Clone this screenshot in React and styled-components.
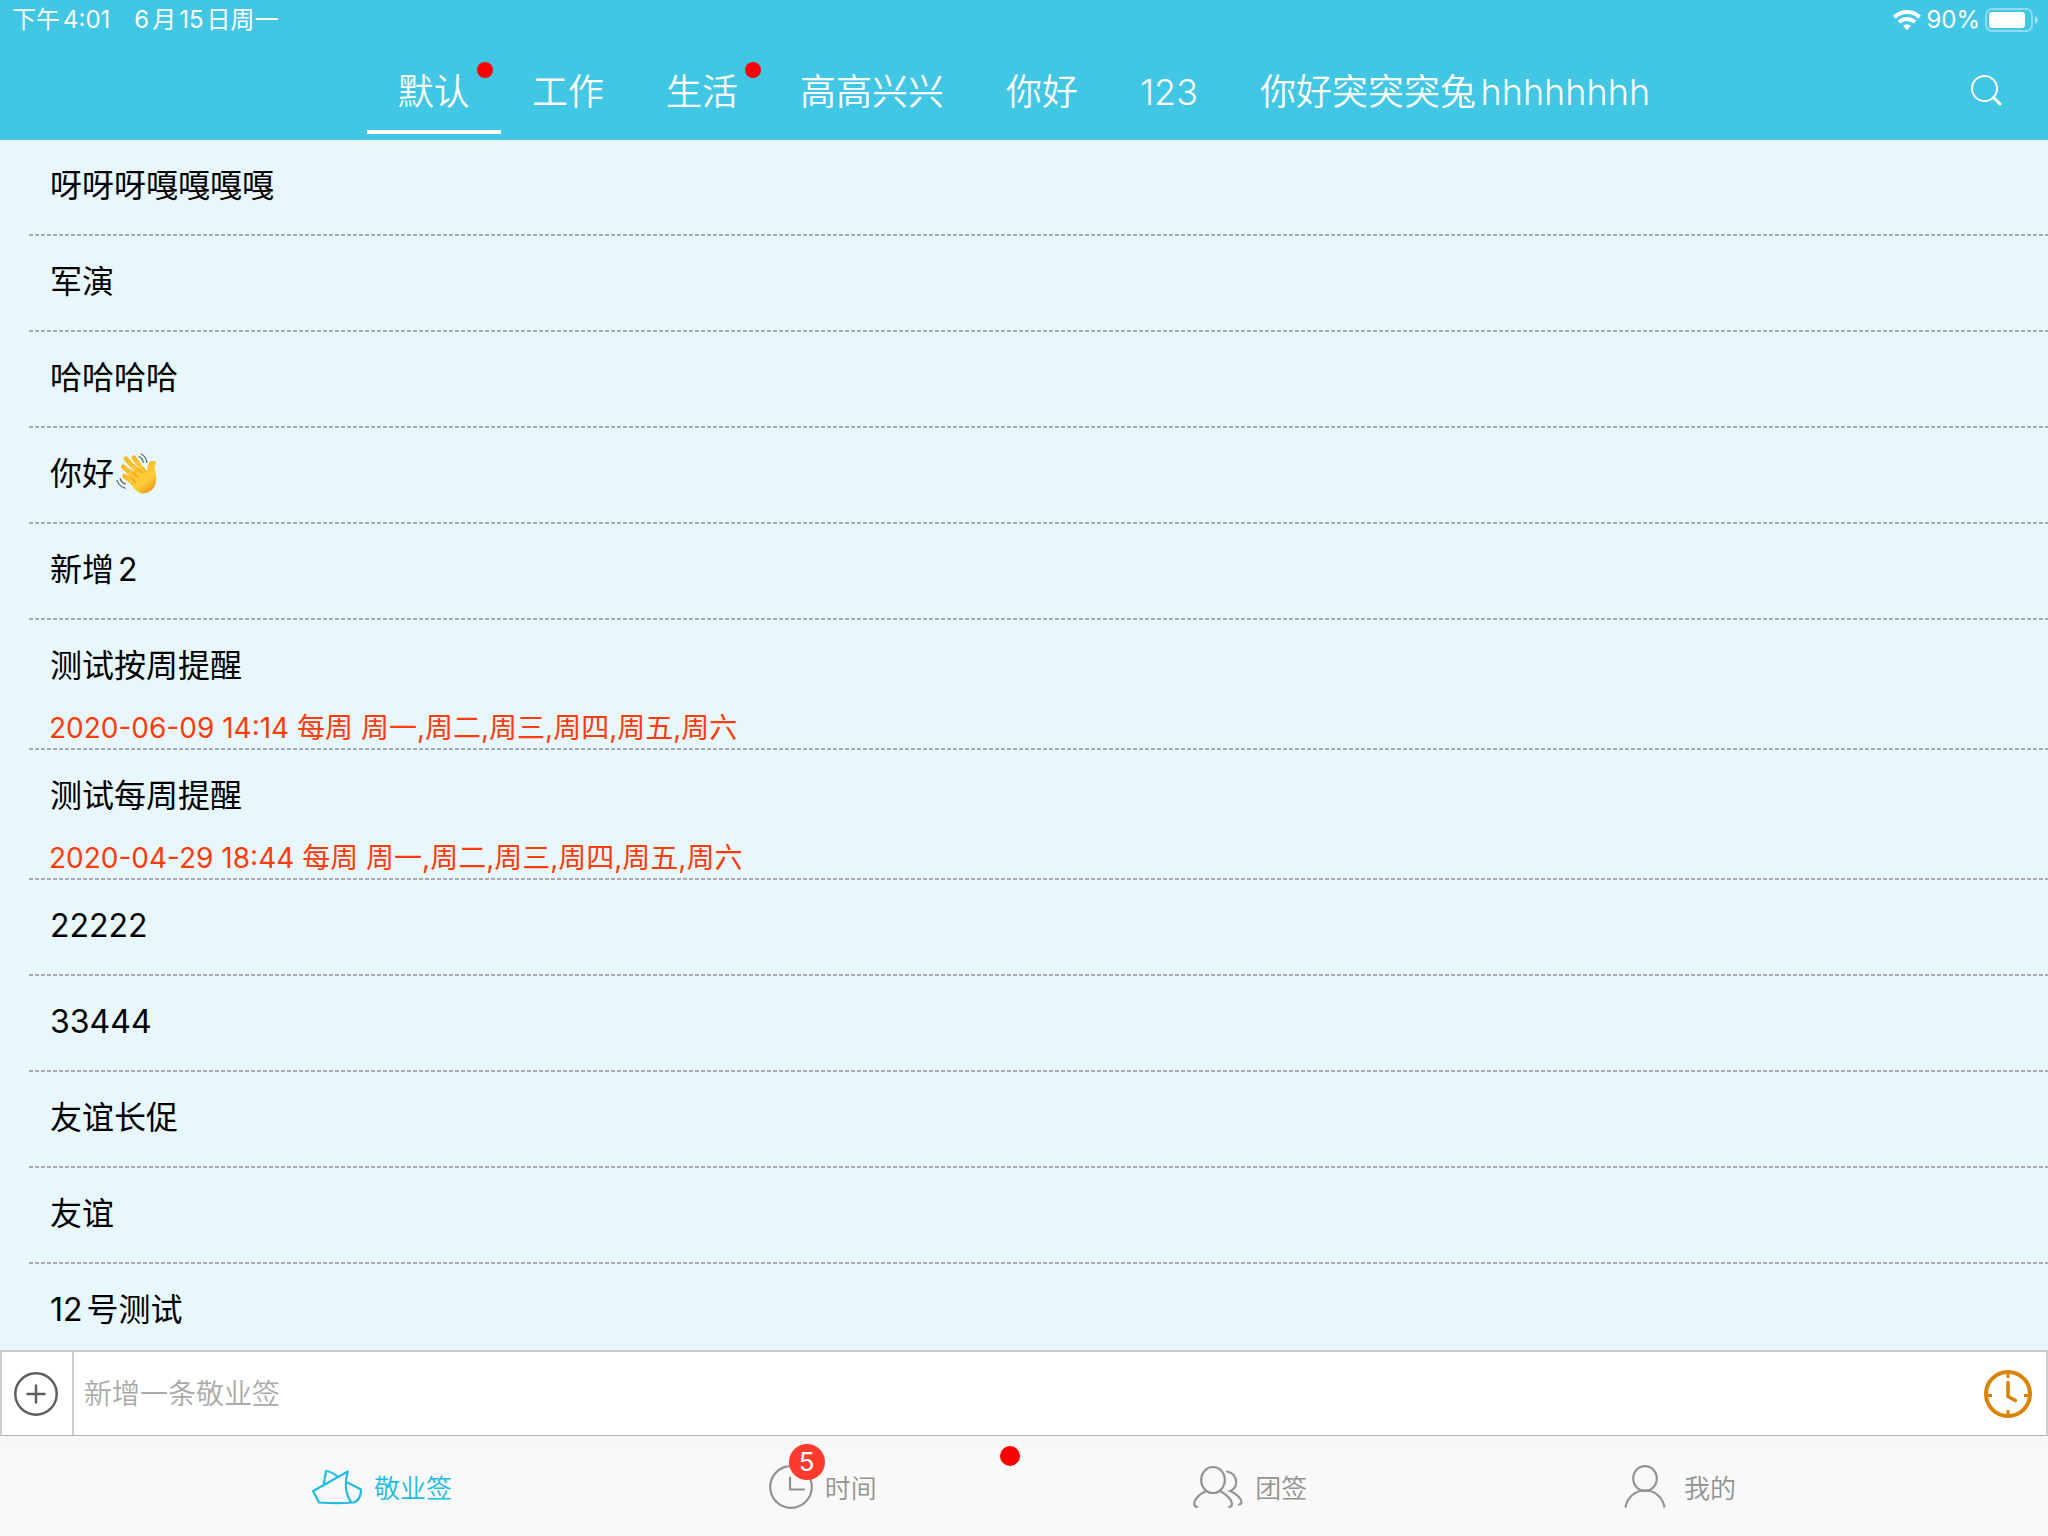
import React, { useState } from "react";
import styled, { createGlobalStyle } from "styled-components";

const color = {
  brand: "#41c6e4",
  accent: "#20bce2",
  list: "#e8f7fc",
  dash: "#a9a9a9",
  remind: "#ff3b0a",
  muted: "#929292",
  red: "#ff0000",
};

const GlobalStyle = createGlobalStyle`
  * { box-sizing: border-box; }
  body {
    margin: 0;
    font-family: Inter, "Noto Sans CJK SC", sans-serif;
    text-autospace: normal;
  }
  button, input { font-family: inherit; }
  button {
    border: 0;
    padding: 0;
    background: none;
    color: inherit;
    cursor: pointer;
    text-autospace: inherit;
  }
`;

const Page = styled.div`
  display: flex;
  flex-direction: column;
  height: 100vh;
  background: ${color.list};
`;

const Header = styled.header`
  flex: none;
  background: ${color.brand};
  color: #fff;
`;

const StatusBar = styled.div`
  display: flex;
  align-items: center;
  height: 40px;
  padding: 0 10px 0 12px;
  font-size: 24px;
  line-height: 40px;
`;

const StatusDate = styled.span`
  margin-left: 24px;
`;

const StatusRight = styled.div`
  display: flex;
  align-items: center;
  gap: 5px;
  margin-left: auto;
`;

const NavBar = styled.div`
  display: grid;
  grid-template-columns: 100px 1fr 100px;
  padding: 10px 0 6px;
`;

const Categories = styled.nav`
  grid-column: 2;
  display: flex;
  justify-content: center;
`;

const Category = styled.button`
  position: relative;
  height: 84px;
  padding: 4px 31px 0;
  border-bottom: 4px solid ${(p) => (p.$active ? "#fff" : "transparent")};
  font-size: 36px;
  font-weight: 350;
  line-height: 76px;
  white-space: nowrap;
`;

const CategoryDot = styled.span`
  position: absolute;
  top: 12px;
  right: 8px;
  width: 16px;
  height: 16px;
  border-radius: 50%;
  background: ${color.red};
`;

const SearchButton = styled.button`
  display: flex;
  align-items: center;
  justify-content: center;
  width: 76px;
  padding-bottom: 4px;
`;

const NoteList = styled.ul`
  flex: 1;
  min-height: 0;
  margin: 0;
  padding: 0 0 0 29px;
  overflow: hidden;
  list-style: none;
`;

const Note = styled.li`
  padding: 24px 20px ${(p) => (p.$reminder ? 2 : 28)}px;
  background: repeating-linear-gradient(90deg, ${color.dash} 0 4px, transparent 4px 6px)
    left bottom / 100% 2px no-repeat;
`;

const NoteTitle = styled.div`
  display: flex;
  align-items: center;
  gap: 2px;
  height: 44px;
  padding-left: 1px;
  font-size: 32px;
  line-height: 44px;
  color: #000;
`;

const NoteReminder = styled.div`
  margin-top: 20px;
  font-size: 28px;
  line-height: 40px;
  color: ${color.remind};
`;

const Composer = styled.form`
  flex: none;
  display: flex;
  height: 86px;
  border: 2px solid #ccc;
  border-bottom: 1px solid #b0b0b0;
  background: #fff;
`;

const AddButton = styled.button`
  display: flex;
  align-items: center;
  justify-content: center;
  width: 72px;
  padding-right: 2px;
  border-right: 2px solid #ccc;
`;

const NoteInput = styled.input`
  flex: 1;
  min-width: 0;
  padding: 0 10px;
  border: 0;
  outline: 0;
  background: none;
  font-size: 28px;
  font-weight: 350;
  &::placeholder {
    color: #aaa;
    opacity: 1;
  }
`;

const ClockButton = styled.button`
  display: flex;
  align-items: center;
  justify-content: center;
  width: 76px;
`;

const TabBar = styled.nav`
  flex: none;
  display: flex;
  justify-content: space-between;
  height: 100px;
  padding: 0 312px;
  background: linear-gradient(#f7f7f7 17px, #f9f9f9 17px);
`;

const Tab = styled.button`
  position: relative;
  display: flex;
  align-items: center;
  gap: 12px;
  padding-top: 2px;
  font-size: 26px;
  font-weight: 350;
  line-height: 36px;
  color: ${(p) => (p.$active ? color.accent : color.muted)};
`;

const TabLabel = styled.span`
  padding-top: 4px;
`;

const TabBadge = styled.span`
  position: absolute;
  top: 8px;
  left: 20px;
  width: 36px;
  height: 36px;
  border-radius: 50%;
  background: #ff3b30;
  color: #fff;
  font-size: 26px;
  font-weight: 400;
  text-align: center;
`;

const TabDot = styled.span`
  position: absolute;
  top: 10px;
  left: 231px;
  width: 20px;
  height: 20px;
  border-radius: 50%;
  background: ${color.red};
`;

const WifiIcon = () => (
  <svg width="28" height="22" viewBox="0 0 28 22" fill="none" stroke="#fff" strokeWidth="4" aria-hidden="true">
    <path d="M1.4 8.2a18 18 0 0 1 25.2 0" />
    <path d="M6 13.2a11.4 11.4 0 0 1 16 0" />
    <path d="M14 21.2l-4-4.4a5.8 5.8 0 0 1 8 0z" fill="#fff" stroke="none" />
  </svg>
);

const BatteryIcon = () => (
  <svg width="53" height="24" viewBox="0 0 53 24" fill="none" aria-hidden="true">
    <rect x="1" y="1" width="46" height="22" rx="6" stroke="#fff" strokeOpacity="0.4" strokeWidth="2" />
    <rect x="4" y="4" width="36" height="16" rx="3" fill="#fff" />
    <path d="M50 8c4 1.500 4 6.500 0 8z" fill="#fff" fillOpacity="0.5" />
  </svg>
);

const SearchIcon = () => (
  <svg width="32" height="32" viewBox="0 0 32 32" fill="none" stroke="#fff" aria-hidden="true">
    <circle cx="14.500" cy="14.500" r="12.500" strokeWidth="2" />
    <path d="M23.500 23.500l6.500 6.500" strokeWidth="3" strokeLinecap="round" />
  </svg>
);

const WaveIcon = () => (
  <svg width="42" height="42" viewBox="0 0 40 40" fill="none" role="img" aria-label="👋">
    <defs>
      <linearGradient id="skin" x1="0" y1="0" x2="0.600" y2="1">
        <stop offset="0" stopColor="#f9b51e" />
        <stop offset="0.700" stopColor="#ffcf3a" />
        <stop offset="1" stopColor="#f0a01c" />
      </linearGradient>
    </defs>
    <g stroke="url(#skin)" strokeWidth="4.400" strokeLinecap="round">
      <path d="M17 4.500l11 15" />
      <path d="M9.500 5.500l15 17" />
      <path d="M7 13l14 14" />
      <path d="M8 22l12 10" />
    </g>
    <path
      d="M14 19l10-6 5 5.500c1.500-3 .5-6 2.500-9 1.500-2.500 4-2.500 6-1.500 2 1-1 3.500-.5 6 .5 4 1.800 7 1.300 12-.5 7-5.300 12.300-12 12.500-4 0-7-2.500-10-5.500z"
      fill="url(#skin)"
    />
    <path d="M13 15l8 8M17 11l8 8M12 22l7 6" stroke="#d98a10" strokeWidth="0.800" strokeLinecap="round" />
    <path
      d="M24 1c3 1.500 4.800 4 5.500 8M22 3.500c2.500 1 3.500 3 4 5.500M1 26c1 3.500 3.500 6 7.500 7.500M4 24.500c.8 2.500 2.500 4.200 5 5"
      stroke="#666"
      strokeWidth="1.200"
      strokeLinecap="round"
    />
  </svg>
);

const PlusIcon = () => (
  <svg width="44" height="44" viewBox="0 0 44 44" fill="none" stroke="#5f5f5f" strokeWidth="2.500" strokeLinecap="round" aria-hidden="true">
    <circle cx="22" cy="22" r="20.700" />
    <path d="M22 13.500v17M13.500 22h17" />
  </svg>
);

const ClockIcon = () => (
  <svg width="48" height="48" viewBox="0 0 48 48" fill="none" stroke="#d98300" strokeWidth="4" aria-hidden="true">
    <circle cx="24" cy="24" r="22" />
    <path d="M24 3v5M24 40v5M3 25.500h5M40 25.500h5" strokeWidth="3" />
    <path d="M24 12.500v14l7.500 4" strokeLinecap="round" strokeLinejoin="round" strokeWidth="3.600" />
  </svg>
);

const HatIcon = () => (
  <svg width="50" height="36" viewBox="0 0 50 36" fill="none" stroke="currentColor" strokeWidth="2.200" strokeLinejoin="round" strokeLinecap="round" aria-hidden="true">
    <path d="M34 12.800c0-4 1-7 1.800-10.300L1.200 22l5.800 11.500c12 .8 24 .8 34.500 0 4.500-1.500 7.500-6.500 7.500-13z" />
    <path d="M34 12.800c-.8 7.500 1.200 14.500 5 20" />
    <path d="M11.800 15l2.200-13c4 .5 8 2.500 12 6" />
  </svg>
);

const TimeIcon = () => (
  <svg width="44" height="44" viewBox="0 0 44 44" fill="none" stroke="currentColor" strokeWidth="2.200" aria-hidden="true">
    <circle cx="22" cy="22" r="20.800" />
    <path d="M21 12.500v12h14" strokeLinecap="round" />
  </svg>
);

const TeamIcon = () => (
  <svg width="50" height="44" viewBox="0 0 50 44" fill="none" stroke="currentColor" strokeWidth="2.200" strokeLinecap="round" aria-hidden="true">
    <ellipse cx="20" cy="15" rx="11.800" ry="13" />
    <path d="M12.800 26.200C6 29 1.300 34.500 1.200 38.500c0 2 1 3.300 3 3.500" />
    <path d="M27.300 26.200c7 3.500 11.500 9 11.700 12.300 0 2-1 3.300-2.800 3.500" />
    <path d="M34 6.500c5 .5 9.300 5 9.200 10.500 0 4-2 7.500-6 9 6.500 2.500 11 8 11.300 11 .1 1.500-.8 2.500-2.500 2.500" />
  </svg>
);

const PersonIcon = () => (
  <svg width="48" height="44" viewBox="0 0 48 44" fill="none" stroke="currentColor" strokeWidth="2.200" aria-hidden="true">
    <ellipse cx="21" cy="13.500" rx="11.800" ry="12.300" />
    <path d="M1.500 42.500C3 32.500 11 25.500 21 25.500S39 32.500 40.500 42.500" />
  </svg>
);

const categories = [
  { name: "默认", dot: true },
  { name: "工作" },
  { name: "生活", dot: true },
  { name: "高高兴兴" },
  { name: "你好" },
  { name: "123" },
  { name: "你好突突突兔hhhhhhhh" },
];

const notes = [
  { title: "呀呀呀嘎嘎嘎嘎" },
  { title: "军演" },
  { title: "哈哈哈哈" },
  { title: "你好", wave: true },
  { title: "新增2" },
  { title: "测试按周提醒", reminder: "2020-06-09 14:14 每周 周一,周二,周三,周四,周五,周六" },
  { title: "测试每周提醒", reminder: "2020-04-29 18:44 每周 周一,周二,周三,周四,周五,周六" },
  { title: "22222" },
  { title: "33444" },
  { title: "友谊长促" },
  { title: "友谊" },
  { title: "12号测试" },
];

const tabs = [
  { name: "敬业签", Icon: HatIcon },
  { name: "时间", Icon: TimeIcon, badge: 5, dot: true },
  { name: "团签", Icon: TeamIcon },
  { name: "我的", Icon: PersonIcon },
];

export default function App() {
  const [category, setCategory] = useState("默认");
  const [tab, setTab] = useState("敬业签");
  const [draft, setDraft] = useState("");

  return (
    <>
      <GlobalStyle />
      <Page>
        <Header>
          <StatusBar>
            <span>下午4:01</span>
            <StatusDate>6月15日周一</StatusDate>
            <StatusRight>
              <WifiIcon />
              <span>90%</span>
              <BatteryIcon />
            </StatusRight>
          </StatusBar>
          <NavBar>
            <Categories>
              {categories.map((c) => (
                <Category
                  key={c.name}
                  type="button"
                  $active={c.name === category}
                  onClick={() => setCategory(c.name)}
                >
                  {c.name}
                  {c.dot && <CategoryDot />}
                </Category>
              ))}
            </Categories>
            <SearchButton type="button" aria-label="搜索">
              <SearchIcon />
            </SearchButton>
          </NavBar>
        </Header>

        <NoteList>
          {notes.map((n) => (
            <Note key={n.title} $reminder={Boolean(n.reminder)}>
              <NoteTitle>
                {n.title}
                {n.wave && <WaveIcon />}
              </NoteTitle>
              {n.reminder && <NoteReminder>{n.reminder}</NoteReminder>}
            </Note>
          ))}
        </NoteList>

        <Composer onSubmit={(e) => e.preventDefault()}>
          <AddButton type="button" aria-label="添加">
            <PlusIcon />
          </AddButton>
          <NoteInput
            aria-label="新增一条敬业签"
            placeholder="新增一条敬业签"
            value={draft}
            onChange={(e) => setDraft(e.target.value)}
          />
          <ClockButton type="button" aria-label="提醒时间">
            <ClockIcon />
          </ClockButton>
        </Composer>

        <TabBar>
          {tabs.map(({ name, Icon, badge, dot }) => (
            <Tab key={name} type="button" $active={name === tab} onClick={() => setTab(name)}>
              <Icon />
              <TabLabel>{name}</TabLabel>
              {badge && <TabBadge>{badge}</TabBadge>}
              {dot && <TabDot />}
            </Tab>
          ))}
        </TabBar>
      </Page>
    </>
  );
}
